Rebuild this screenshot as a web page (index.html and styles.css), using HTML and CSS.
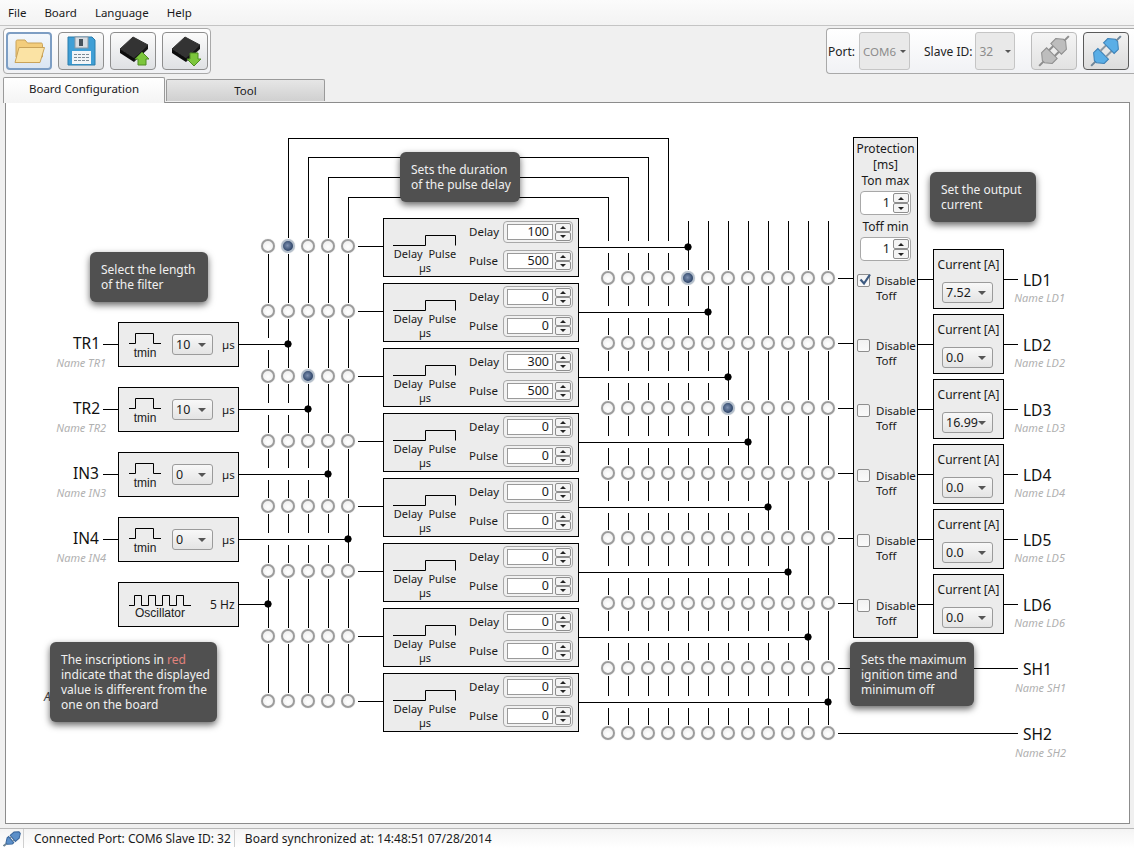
FILE: index.html
```html
<!DOCTYPE html>
<html>
<head>
  <meta charset="utf-8">
  <title>Board Configuration</title>
  <link rel="stylesheet" href="styles.css">
</head>
<body>
  <div class="menu-bar">
    <span class="menu-item">File</span>
    <span class="menu-item">Board</span>
    <span class="menu-item">Language</span>
    <span class="menu-item">Help</span>
  </div>

  <div class="tool-row">
    <div class="tool-group">
      <div class="tool-btn focused">
        <svg width="34" height="28" viewBox="0 0 34 28">
          <path d="M4 20V4.500C4 3.500 4.600 3 5.500 3H13l2.500 3H29c1 0 1.500.6 1.500 1.500V20z" fill="#f3cd7c" stroke="#c9a35a"/>
          <path d="M7 10.500H32.500L28 25.500H3z" fill="#fbe3a4" stroke="#c9a35a"/>
        </svg>
      </div>
      <div class="tool-btn">
        <svg width="34" height="34" viewBox="0 0 34 34">
          <path d="M4 3H28L31 6V31H4z" fill="#3f9fd6" stroke="#2b7cab"/>
          <rect x="11" y="3" width="13" height="11" fill="#d8dde2" stroke="#8a97a3"/>
          <rect x="15" y="5" width="4" height="7" fill="#46525c"/>
          <rect x="8" y="17" width="19" height="13" fill="#f1f5f8"/>
          <path d="M10 20.500h15M10 23.500h15M10 26.500h15" stroke="#7a8a96" stroke-dasharray="3 1"/>
        </svg>
      </div>
      <div class="tool-btn">
        <svg width="36" height="34" viewBox="0 0 36 34">
          <path d="M5 15L18 3L33 11L19 24z" fill="#333" stroke="#333" stroke-linejoin="round"/>
          <path d="M5 15L19 24V28L5 19z" fill="#0c0c0c"/>
          <path d="M19 24L33 11V15L19 28z" fill="#161616"/>
          <path d="M27 18L34 25H31V31H23V25H20z" fill="#7cc63c" stroke="#4e8c22"/>
        </svg>
      </div>
      <div class="tool-btn">
        <svg width="36" height="34" viewBox="0 0 36 34">
          <path d="M5 15L18 3L33 11L19 24z" fill="#333" stroke="#333" stroke-linejoin="round"/>
          <path d="M5 15L19 24V28L5 19z" fill="#0c0c0c"/>
          <path d="M19 24L33 11V15L19 28z" fill="#161616"/>
          <path d="M27 32L34 25H31V19H23V25H20z" fill="#7cc63c" stroke="#4e8c22"/>
        </svg>
      </div>
    </div>

    <div class="tool-group port-group">
      <span class="port-label">Port:</span>
      <div class="tall-combo port-combo"><span>COM6</span><i class="arrow"></i></div>
      <span class="port-label slave-label">Slave ID:</span>
      <div class="tall-combo slave-combo"><span>32</span><i class="arrow"></i></div>
      <div class="tool-btn disabled plug-one">
        <svg width="36" height="34" viewBox="0 0 36 34">
          <g transform="rotate(-45 18 17)" fill="#bdbdbd" stroke="#8d8d8d">
            <path d="M-3 17H3" stroke-width="2"/>
            <path d="M3 15.500L8 9.500H15V24.500H8L3 18.500z"/>
            <path d="M15 13H21M15 21H21" stroke-width="2"/>
            <path d="M21 9.500H28L33 15.500V18.500L28 24.500H21z"/>
            <path d="M33 17H39" stroke-width="2"/>
          </g>
        </svg>
      </div>
      <div class="tool-btn active">
        <svg width="36" height="34" viewBox="0 0 36 34">
          <g transform="rotate(-45 18 17)" fill="#5aaee6" stroke="#3a7fb5">
            <path d="M-3 17H3" stroke="#6e8598" stroke-width="2"/>
            <path d="M3 15.500L8 9.500H14V24.500H8L3 18.500z"/>
            <path d="M14 13H22M14 21H22" stroke="#8b98a3" stroke-width="2"/>
            <path d="M22 9.500H28L33 15.500V18.500L28 24.500H22z"/>
            <path d="M33 17H39" stroke="#6e8598" stroke-width="2"/>
          </g>
        </svg>
      </div>
    </div>
  </div>

  <div class="tab-row">
    <div class="tab current">Board Configuration</div>
    <div class="tab">Tool</div>
  </div>

  <div class="panel">
    <div class="board" id="board"></div>
  </div>

  <div class="status-bar">
    <span class="status-icon">
      <svg width="18" height="16" viewBox="0 0 18 16">
        <g transform="rotate(-40 9 8)">
          <rect x="-2" y="7" width="4" height="2" fill="#6e8598"/>
          <path d="M2 7L6 4H8V12H6L2 9z" fill="#5b8fc9" stroke="#39669c"/>
          <path d="M10 4H15L19 7V9L15 12H10z" fill="#5b8fc9" stroke="#39669c"/>
          <path d="M8 6H10M8 10H10" stroke="#6e8598"/>
        </g>
      </svg>
    </span>
    <span class="status-cell first">Connected Port: COM6 Slave ID: 32</span>
    <span class="status-cell">Board synchronized at: 14:48:51 07/28/2014</span>
  </div>

  <script src="script.js"></script>
</body>
</html>
```

FILE: styles.css
```css
html, body {
  margin: 0;
  height: 100%;
  overflow: hidden;
}

body {
  display: flex;
  flex-direction: column;
  background: #f0f0f0;
  font-family: "Noto Sans", "DejaVu Sans", sans-serif;
  font-size: 12px;
  color: #1a1a1a;
}

/* menu */
.menu-bar {
  height: 25px;
  display: flex;
  align-items: center;
  padding-left: 8px;
  gap: 18px;
  font-size: 11.500px;
  background: linear-gradient(#fbfbfb, #f3f3f3);
  border-bottom: 1px solid #c4c4c4;
}

/* toolbars */
.tool-row {
  height: 50px;
  display: flex;
  justify-content: space-between;
  align-items: flex-start;
  padding: 2px 0 0 3px;
  box-sizing: border-box;
}

.tool-group {
  display: flex;
  align-items: center;
  gap: 6px;
  height: 46px;
  box-sizing: border-box;
  padding: 0 2px;
  border: 1px solid #a9a9a9;
  border-radius: 4px;
  background: linear-gradient(#ffffff, #f1f2f5);
}

.tool-btn {
  width: 46px;
  height: 38px;
  box-sizing: border-box;
  display: flex;
  align-items: center;
  justify-content: center;
  border: 1px solid #8e8e8e;
  border-radius: 4px;
  background: linear-gradient(#fbfbfb, #dfe1e4);
}

.tool-btn.focused {
  border: 2px solid #7d9ec4;
  background: linear-gradient(#f4f8fc, #dbe6f2);
}

.tool-btn.disabled {
  border-color: #bcbcbc;
  background: linear-gradient(#f4f4f4, #e2e2e2);
}

.tool-btn.active {
  border-color: #5a5a5a;
  background: linear-gradient(#f2f2f2, #dcdcdc);
}

.port-group {
  width: 308px;
  gap: 0;
  padding: 0 0 0 1px;
  border-right: none;
  border-radius: 4px 0 0 4px;
}

.port-label {
  color: #222;
}

.slave-label {
  margin: 0 3px 0 14px;
}

.tall-combo {
  height: 38px;
  box-sizing: border-box;
  display: flex;
  align-items: center;
  justify-content: space-between;
  padding: 0 3px;
  border: 1px solid #c5c5c5;
  border-radius: 3px;
  background: #e9e9e9;
  color: #8c8c8c;
}

.tall-combo .arrow {
  border-left-width: 3px;
  border-right-width: 3px;
  border-top-width: 3px;
}

.port-combo {
  width: 51px;
  margin-left: 4px;
  font-size: 11.500px;
}

.slave-combo {
  width: 40px;
}

.plug-one {
  margin: 0 6px 0 16px;
}

.arrow {
  flex: none;
  width: 0;
  height: 0;
  border-left: 4px solid transparent;
  border-right: 4px solid transparent;
  border-top: 4px solid #555;
}

/* tabs */
.tab-row {
  height: 26px;
  display: flex;
  align-items: flex-end;
  padding-left: 3px;
  font-size: 11.500px;
}

.tab {
  width: 159px;
  height: 22px;
  margin-bottom: 1px;
  display: flex;
  align-items: center;
  justify-content: center;
  box-sizing: border-box;
  border: 1px solid #9a9a9a;
  border-bottom: none;
  border-radius: 2px 2px 0 0;
  background: linear-gradient(#e6e6e6, #d0d0d0);
  margin-left: 1px;
}

.tab.current {
  width: 162px;
  height: 26px;
  margin: 0 0 -1px 0;
  padding-bottom: 4px;
  background: linear-gradient(#ffffff, #f4f4f4);
  position: relative;
  z-index: 1;
}

/* main panel */
.panel {
  flex: 1;
  margin: 0 4px 4px 5px;
  border: 1px solid #8c8c8c;
  background: #ffffff;
  min-height: 0;
}

.board {
  position: relative;
  width: 100%;
  height: 100%;
  overflow: hidden;
}

.wires {
  position: absolute;
  left: 0;
  top: 0;
}

.wires circle {
  shape-rendering: geometricPrecision;
}

/* radio nodes */
.node {
  position: absolute;
  width: 14px;
  height: 14px;
  box-sizing: border-box;
  border: 2px solid #9c9c9c;
  border-radius: 50%;
  background: radial-gradient(circle at 50% 60%, #ffffff, #eaeaea);
  box-shadow: 0 0 1px #bbb;
}

.node.on {
  background: radial-gradient(circle at 45% 45%, #7f92b2, #2f4569 70%);
  border-color: #b4bfcb;
}

/* boxes on the diagram */
.box {
  position: absolute;
  box-sizing: border-box;
  border: 1px solid #000;
  background: #ececec;
}

.filter-box {
  width: 121px;
  height: 45px;
  display: flex;
  align-items: center;
  padding-left: 9px;
}

.wave {
  flex: none;
  text-align: center;
  line-height: 11px;
  font-family: "Liberation Sans Narrow", "Liberation Sans", sans-serif;
  font-size: 12px;
}

.wave svg {
  display: block;
}

.tmin {
  width: 34px;
  margin: 1px 10px 0 0;
}

.combo {
  flex: none;
  display: flex;
  align-items: center;
  justify-content: space-between;
  box-sizing: border-box;
  height: 21px;
  padding: 0 6px 0 3px;
  border: 1px solid #9b9b9b;
  border-radius: 3px;
  background: linear-gradient(#f8f8f8, #e4e4e4);
  font-size: 12.500px;
}

.filter-box .combo {
  width: 41px;
}

.unit {
  margin-left: 9px;
  font-size: 11.500px;
}

.oscillator {
  width: 64px;
  margin-right: 18px;
  margin-top: 3px;
}

.osc-value {
  font-size: 12px;
}

/* delay and pulse blocks */
.delay-box {
  width: 196px;
  height: 59px;
  display: flex;
  padding-left: 9px;
}

.delay-wave {
  width: 64px;
  margin-right: 12px;
  padding-top: 15px;
  flex: none;
  text-align: center;
  line-height: 14px;
  font-size: 11px;
}

.delay-wave svg {
  display: block;
}

.delay-fields {
  display: grid;
  grid-template-columns: 34px 70px;
  align-items: center;
  align-content: start;
  row-gap: 7px;
  margin-top: 2px;
  font-size: 11.500px;
}

.delay-fields span {
  margin-top: -2px;
}

.spin {
  display: flex;
  align-items: center;
  justify-content: space-between;
  box-sizing: border-box;
  height: 22px;
  padding: 0 1px 0 3px;
  border: 1px solid #a8a8a8;
  border-radius: 4px;
  background: #f1f1f1;
}

.spin-value {
  width: 46px;
  height: 16px;
  box-sizing: border-box;
  padding-right: 3px;
  border: 1px solid #9a9a9a;
  background: #fff;
  text-align: right;
  line-height: 13px;
  font-size: 12.500px;
}

.spin-buttons {
  display: flex;
  flex-direction: column;
}

.spin-buttons b {
  display: flex;
  align-items: center;
  justify-content: center;
  width: 16px;
  height: 9px;
  border: 1px solid #8e8e8e;
  border-radius: 2px;
  box-sizing: border-box;
  background: #f4f4f4;
}

.up::after,
.down::after {
  content: "";
  border-left: 3px solid transparent;
  border-right: 3px solid transparent;
}

.up::after {
  border-bottom: 3px solid #222;
}

.down::after {
  border-top: 3px solid #222;
}

/* protection column */
.protection {
  width: 65px;
  height: 501px;
  padding-top: 3px;
  line-height: 16px;
  text-align: center;
}

.protection-title {
  height: 32px;
}

.protection-spin {
  width: 51px;
  height: 24px;
  margin: 2px 0 4px 6px;
  padding-left: 0;
  background: #fff;
}

.protection-spin .spin-value {
  width: 30px;
  height: 20px;
  padding-right: 1px;
  border: none;
  line-height: 20px;
  background: transparent;
}

.protection-spin .spin-buttons b {
  height: 10px;
}

.protection-label {
  height: 16px;
}

.disable {
  position: absolute;
  width: 59px;
  display: flex;
}

.check {
  flex: none;
  position: relative;
  width: 13px;
  height: 13px;
  box-sizing: border-box;
  margin-top: 1px;
  border: 1px solid #8e8e8e;
  border-radius: 2px;
  background: linear-gradient(#f2f2f2, #fafafa);
}

.check svg {
  position: absolute;
  left: 0;
  top: -2px;
}

.disable-text {
  margin-left: 6px;
  line-height: 15px;
  font-size: 11.500px;
}

/* current boxes */
.current-box {
  width: 71px;
  height: 60px;
  padding-top: 7px;
  text-align: center;
  line-height: 15px;
}

.current-box .combo {
  width: 51px;
  margin: 10px 0 0 8px;
  text-align: left;
}

/* signal names */
.signal {
  position: absolute;
  font-size: 15.500px;
  line-height: 18px;
  color: #111;
}

.signal-name {
  position: absolute;
  width: 70px;
  text-align: right;
  font-style: italic;
  font-size: 11px;
  line-height: 13px;
  color: #b0b0b0;
}

/* dark hints */
.hint {
  position: absolute;
  box-sizing: border-box;
  padding: 10px 0 10px 11px;
  border-radius: 6px;
  background: #505050;
  color: #f0f0f0;
  line-height: 15px;
  white-space: nowrap;
  box-shadow: 0 3px 7px rgba(0, 0, 0, 0.6);
}

.hint em {
  font-style: normal;
  color: #e0827c;
}

.stray {
  position: absolute;
  font-style: italic;
  color: #444;
}

/* status bar */
.status-bar {
  height: 20px;
  display: flex;
  align-items: center;
  background: linear-gradient(#f4f4f4, #ffffff);
  border-top: 1px solid #b8b8b8;
  box-sizing: border-box;
}

.status-icon {
  width: 20px;
  padding-left: 3px;
  height: 100%;
  display: flex;
  align-items: center;
  border-right: 1px solid #cfcfcf;
}

.status-cell {
  padding: 0 3px 0 10px;
  white-space: nowrap;
}

.status-cell.first {
  border-right: 1px solid #cfcfcf;
}
```

FILE: script.js
```js
// the diagram is drawn in screenshot coordinates, the board starts at (6,103)
const ORIGIN_X = 6;
const ORIGIN_Y = 103;
const STEP = 65;

const board = document.getElementById('board');

const leftCols = [268, 288, 308, 328, 348];
const rightCols = [608, 628, 648, 668, 688, 708, 728, 748, 768, 788, 808, 828];
const leftRows = [0, 1, 2, 3, 4, 5, 6, 7].map(i => 246 + i * STEP);
const rightRows = [0, 1, 2, 3, 4, 5, 6, 7].map(i => 278 + i * STEP);

const delays = [
  [100, 500], [0, 0], [300, 500], [0, 0],
  [0, 0], [0, 0], [0, 0], [0, 0]
];
const inputs = [
  { name: 'TR1', value: 10 },
  { name: 'TR2', value: 10 },
  { name: 'IN3', value: 0 },
  { name: 'IN4', value: 0 }
];
const outputs = ['7.52', '0.0', '16.99', '0.0', '0.0', '0.0'];

let wires = '';

function line(x1, y1, x2, y2) {
  wires += `<line x1="${x1}" y1="${y1}" x2="${x2}" y2="${y2}"/>`;
}

function dot(x, y) {
  wires += `<circle cx="${x}" cy="${y}" r="3.2"/>`;
}

// vertical wire, broken around the radio nodes and the wires it hops over
function column(x, top, bottom, rows, hops) {
  const gaps = rows.map(y => [y - 8, y + 8]).concat(hops.map(y => [y - 6, y + 6]));
  gaps.sort((a, b) => a[0] - b[0]);
  let y = top;
  gaps.forEach(g => {
    if (g[1] <= y) return;
    if (g[0] > y) line(x, y, x, g[0]);
    y = g[1];
  });
  if (y < bottom) line(x, y, x, bottom);
}

function add(html, x, y) {
  const holder = document.createElement('div');
  holder.innerHTML = html.trim();
  const el = holder.firstChild;
  el.style.left = (x - ORIGIN_X) + 'px';
  el.style.top = (y - ORIGIN_Y) + 'px';
  board.appendChild(el);
  return el;
}

function spin(value, extra) {
  return `<div class="spin ${extra || ''}">
      <div class="spin-value">${value}</div>
      <div class="spin-buttons"><b class="up"></b><b class="down"></b></div>
    </div>`;
}

function combo(value) {
  return `<div class="combo"><span>${value}</span><i class="arrow"></i></div>`;
}

// ----- wiring -----
const inputDots = [288, 308, 328, 348];

leftCols.forEach((x, c) => {
  const hops = [];
  inputDots.forEach((d, i) => {
    if (x < d) hops.push(344 + i * STEP);
  });
  const tops = [246, 138, 157, 177, 197];
  column(x, tops[c], 701, leftRows, hops);
});

inputDots.forEach((d, i) => {
  line(238, 344 + i * STEP, d, 344 + i * STEP);
  dot(d, 344 + i * STEP);
});
line(238, 604, 268, 604);
dot(268, 604);

// top routing from the left columns over to the right ones
[[288, 138, 668], [308, 157, 648], [328, 177, 628], [348, 197, 608]].forEach(r => {
  line(r[0], r[1], r[2], r[1]);
});

rightCols.forEach((x, c) => {
  const hops = [];
  delays.forEach((d, i) => {
    if (x < 688 + i * 20) hops.push(247 + i * STEP);
  });
  const tops = [197, 177, 157, 138];
  column(x, c < 4 ? tops[c] : 221, 733, rightRows, hops);
});

leftRows.forEach((y, i) => {
  line(358, y, 383, y);
  line(579, y + 1, 688 + i * 20, y + 1);
  dot(688 + i * 20, y + 1);
});

rightRows.forEach((y, i) => {
  if (i < 6) {
    line(838, y, 853, y);
    line(918, y + 1, 933, y + 1);
    line(1003, y + 1, 1018, y + 1);
  } else {
    line(838, y, 1018, y);
  }
});

for (let i = 0; i < 4; i++) {
  line(103, 344 + i * STEP, 118, 344 + i * STEP);
}

board.innerHTML = `<svg class="wires" width="1124" height="720" viewBox="${ORIGIN_X} ${ORIGIN_Y} 1124 720"
  stroke="#000" fill="#000" shape-rendering="crispEdges">${wires}</svg>`;

// ----- radio nodes -----
leftRows.forEach((y, r) => {
  leftCols.forEach((x, c) => {
    const on = (r === 0 && c === 1) || (r === 2 && c === 2);
    add(`<div class="node ${on ? 'on' : ''}"></div>`, x - 7, y - 7);
  });
});

rightRows.forEach((y, r) => {
  rightCols.forEach((x, c) => {
    const on = (r === 0 && c === 4) || (r === 2 && c === 6);
    add(`<div class="node ${on ? 'on' : ''}"></div>`, x - 7, y - 7);
  });
});

// ----- input filters -----
inputs.forEach((input, i) => {
  const y = 322 + i * STEP;
  add(`<div class="box filter-box">
      <div class="wave tmin">
        <svg width="34" height="16"><path d="M1 11.500H7.500V1.500H25.500V11.500H33" fill="none" stroke="#000"/></svg>
        tmin
      </div>
      ${combo(input.value)}
      <span class="unit">µs</span>
    </div>`, 118, y);
  add(`<div class="signal">${input.name}</div>`, 73, y + 12);
  add(`<div class="signal-name">Name ${input.name}</div>`, 36, y + 34);
});

add(`<div class="box filter-box">
    <div class="wave oscillator">
      <svg width="64" height="14"><path d="M1 11.500H6.500V1.500H13.500V11.500H20.500V1.500H27.500V11.500H34.500V1.500H41.500V11.500H48.500V1.500H55.500V11.500H63" fill="none" stroke="#000"/></svg>
      Oscillator
    </div>
    <span class="osc-value">5&nbsp;Hz</span>
  </div>`, 118, 582);

// ----- delay blocks -----
delays.forEach((d, i) => {
  add(`<div class="box delay-box">
      <div class="delay-wave">
        <svg width="64" height="13"><path d="M0 11.500H32.500V1.500H62.500V11.500" fill="none" stroke="#000"/></svg>
        Delay&nbsp;&nbsp;Pulse<br>µs
      </div>
      <div class="delay-fields">
        <span>Delay</span>${spin(d[0])}
        <span>Pulse</span>${spin(d[1])}
      </div>
    </div>`, 383, 218 + i * STEP);
});

// ----- protection column -----
add(`<div class="box protection">
    <div class="protection-title">Protection<br>[ms]</div>
    <div class="protection-label">Ton max</div>
    ${spin(1, 'protection-spin')}
    <div class="protection-label">Toff min</div>
    ${spin(1, 'protection-spin')}
  </div>`, 853, 137);

const tick = `<svg width="14" height="14"><path d="M2.500 6.500L6 10.500L12 1.500" fill="none" stroke="#3d5a80" stroke-width="2.200"/></svg>`;

outputs.forEach((value, i) => {
  const y = rightRows[i];
  add(`<div class="disable">
      <span class="check">${i === 0 ? tick : ''}</span>
      <span class="disable-text">Disable<br>Toff</span>
    </div>`, 857, y - 5);
  add(`<div class="box current-box">Current [A]${combo(value)}</div>`, 933, 249 + i * STEP);
  add(`<div class="signal">LD${i + 1}</div>`, 1023, y - 7);
  add(`<div class="signal-name">Name LD${i + 1}</div>`, 995, y + 13);
});

add('<div class="signal">SH1</div>', 1023, 660);
add('<div class="signal-name">Name SH1</div>', 996, 681);
add('<div class="signal">SH2</div>', 1023, 725);
add('<div class="signal-name">Name SH2</div>', 996, 746);

// ----- hints -----
add('<div class="stray">A</div>', 44, 688);

function hint(text, x, y, w, h) {
  const el = add(`<div class="hint">${text}</div>`, x, y);
  el.style.width = w + 'px';
  el.style.height = h + 'px';
}

hint('Select the length<br>of the filter', 90, 252, 118, 50);
hint('Sets the duration<br>of the pulse delay', 400, 152, 120, 50);
hint('Set the output<br>current', 930, 172, 106, 50);
hint('The inscriptions in <em>red</em><br>indicate that the displayed<br>value is different from the<br>one on the board', 50, 642, 167, 80);
hint('Sets the maximum<br>ignition time and<br>minimum off', 850, 642, 124, 64);
```
